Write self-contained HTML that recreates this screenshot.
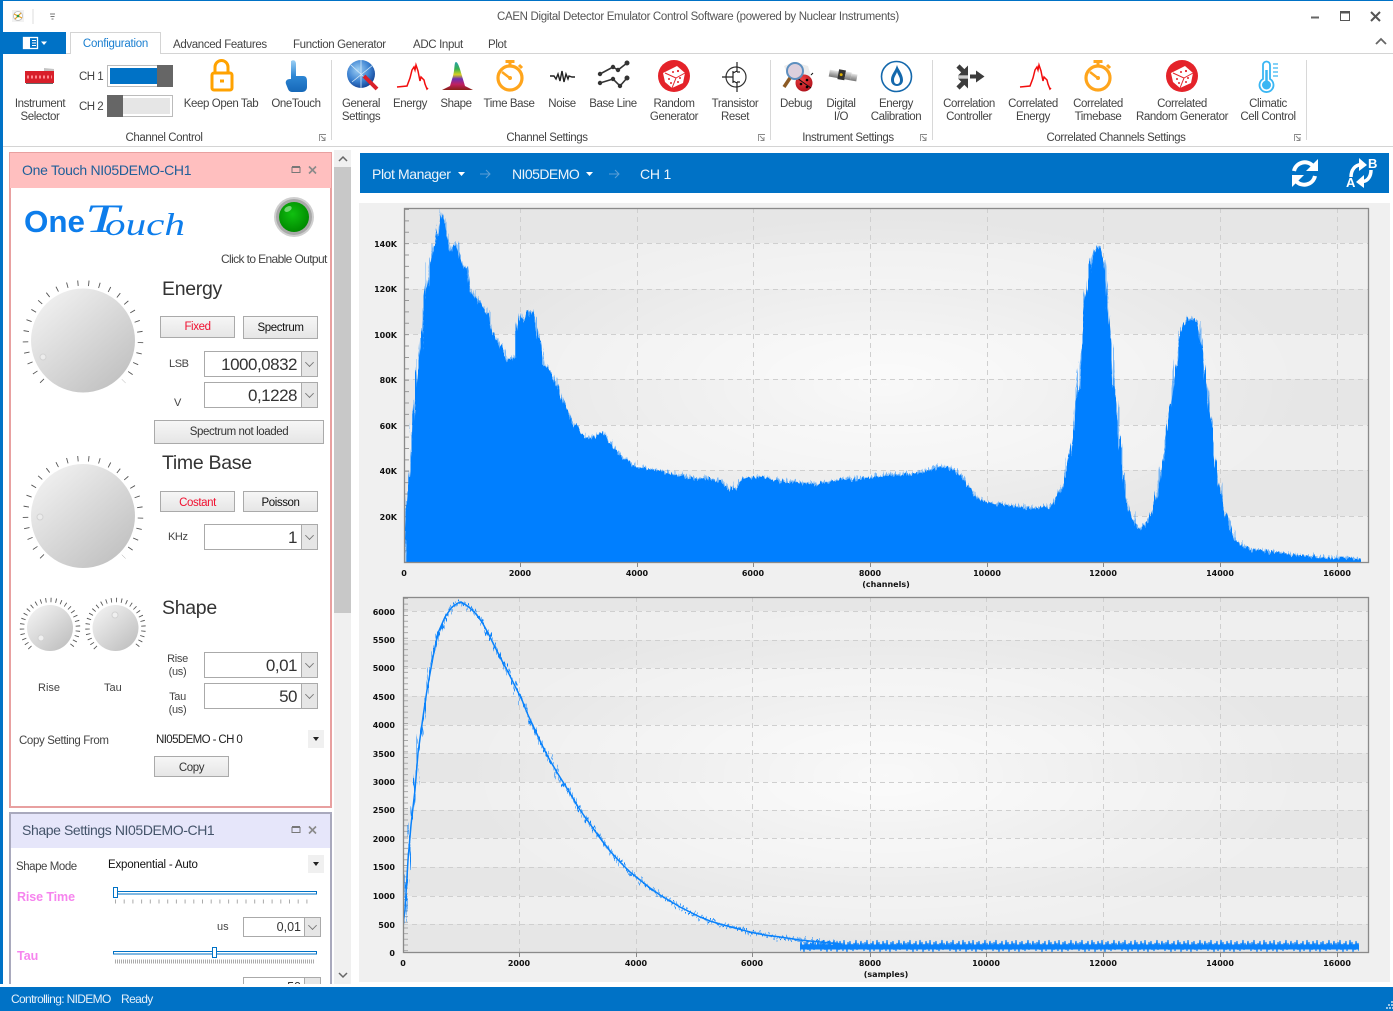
<!DOCTYPE html>
<html><head><meta charset="utf-8"><style>
html,body{margin:0;padding:0;background:#fff}
#p{position:relative;width:1393px;height:1011px;overflow:hidden;background:#fff;font:12px/13px "Liberation Sans",sans-serif;color:#444}
.a{position:absolute;white-space:nowrap}
.t{font-size:11.5px;letter-spacing:-.35px}
.c{position:absolute;width:160px;text-align:center;white-space:nowrap;top:98px;font-size:11.5px;letter-spacing:-.4px}
.g{top:132px}
.b{position:absolute;box-sizing:border-box;border:1px solid #aaa;background:linear-gradient(#f6f6f6,#e6e6e6);text-align:center;color:#333;line-height:22px;font-size:11.5px;letter-spacing:-.4px}
.i{position:absolute;box-sizing:border-box;border:1px solid #aaa;background:#fff;font-size:17px;letter-spacing:-.5px;line-height:25px;text-align:right;padding-right:20px;color:#333}
.i:after{content:"";position:absolute;right:0;top:0;bottom:0;width:15px;background:#e6e6e6;border-left:1px solid #aaa}
.i i{position:absolute;right:4px;top:50%;margin-top:-5px;width:6px;height:6px;border-right:1.5px solid #777;border-bottom:1.5px solid #777;transform:rotate(45deg) scale(.9);z-index:1}
.d{position:absolute;width:16px;height:18px;background:#f0f0f0}
.d:after{content:"";position:absolute;left:5px;top:7px;border:3px solid transparent;border-top:4px solid #222}
svg{position:absolute;left:0;top:0}
</style></head><body><div id="p">

<div class="a" style="left:0;top:0;width:1393px;height:1px;background:#0072c6"></div>
<div class="a" style="left:0;top:0;width:3px;height:1011px;background:#0072c6"></div>
<div class="a" style="left:3px;top:146px;width:1390px;height:1px;background:#d4d4d4"></div>
<div class="a" style="left:66px;top:53px;width:1327px;height:1px;background:#d4d4d4"></div>

<div class="a" style="left:497px;top:11px;font-size:11.5px;letter-spacing:-.33px;color:#555">CAEN Digital Detector Emulator Control Software (powered by Nuclear Instruments)</div>

<div class="a" style="left:3px;top:32px;width:63px;height:22px;background:#0072c6"></div>
<div class="a" style="left:70px;top:32px;width:91px;height:22px;box-sizing:border-box;border:1px solid #d4d4d4;border-bottom:0;background:#fff;color:#1a7fd0;text-align:center;line-height:23px;font-size:11.5px;letter-spacing:-.25px">Configuration</div>
<div class="a t" style="left:173px;top:39px">Advanced Features</div>
<div class="a t" style="left:293px;top:39px">Function Generator</div>
<div class="a t" style="left:413px;top:39px">ADC Input</div>
<div class="a t" style="left:488px;top:39px">Plot</div>

<div class="c" style="left:-40px">Instrument<br>Selector</div>
<div class="c" style="left:141px">Keep Open Tab</div>
<div class="c" style="left:216px">OneTouch</div>
<div class="c" style="left:281px">General<br>Settings</div>
<div class="c" style="left:330px">Energy</div>
<div class="c" style="left:376px">Shape</div>
<div class="c" style="left:429px">Time Base</div>
<div class="c" style="left:482px">Noise</div>
<div class="c" style="left:533px">Base Line</div>
<div class="c" style="left:594px">Random<br>Generator</div>
<div class="c" style="left:655px">Transistor<br>Reset</div>
<div class="c" style="left:716px">Debug</div>
<div class="c" style="left:761px">Digital<br>I/O</div>
<div class="c" style="left:816px">Energy<br>Calibration</div>
<div class="c" style="left:889px">Correlation<br>Controller</div>
<div class="c" style="left:953px">Correlated<br>Energy</div>
<div class="c" style="left:1018px">Correlated<br>Timebase</div>
<div class="c" style="left:1102px">Correlated<br>Random Generator</div>
<div class="c" style="left:1188px">Climatic<br>Cell Control</div>
<div class="c g" style="left:84px">Channel Control</div>
<div class="c g" style="left:467px">Channel Settings</div>
<div class="c g" style="left:768px">Instrument Settings</div>
<div class="c g" style="left:1036px">Correlated Channels Settings</div>
<div class="a t" style="left:79px;top:71px;letter-spacing:-.5px">CH 1</div>
<div class="a t" style="left:79px;top:101px;letter-spacing:-.5px">CH 2</div>

<div class="a" style="left:107px;top:65px;width:66px;height:22px;box-sizing:border-box;border:1px solid #bbb"></div>
<div class="a" style="left:110px;top:68px;width:47px;height:16px;background:#0072c6"></div>
<div class="a" style="left:157px;top:65px;width:16px;height:22px;background:#666"></div>
<div class="a" style="left:107px;top:95px;width:66px;height:22px;box-sizing:border-box;border:1px solid #bbb"></div>
<div class="a" style="left:123px;top:98px;width:47px;height:16px;background:#e6e6e6"></div>
<div class="a" style="left:107px;top:95px;width:16px;height:22px;background:#666"></div>

<!-- ribbon icons -->
<svg width="1393" height="150" viewBox="0 0 1393 150">
<defs>
<radialGradient id="gl" cx=".4" cy=".35" r=".7"><stop offset="0" stop-color="#9fd0f5"/><stop offset=".6" stop-color="#3a80d0"/><stop offset="1" stop-color="#123f90"/></radialGradient>
<radialGradient id="bug" cx=".4" cy=".3" r=".8"><stop offset="0" stop-color="#f04040"/><stop offset="1" stop-color="#a80d18"/></radialGradient>
<linearGradient id="rb" x1="0" y1="0" x2="0" y2="1"><stop offset="0" stop-color="#27a0a8"/><stop offset=".25" stop-color="#38b050"/><stop offset=".45" stop-color="#d8d020"/><stop offset=".6" stop-color="#7030b0"/><stop offset=".8" stop-color="#c02060"/><stop offset="1" stop-color="#8a2015"/></linearGradient>
<linearGradient id="hf" x1="0" y1="0" x2="0" y2="1"><stop offset="0" stop-color="#9cd0f4"/><stop offset=".5" stop-color="#2d86d4"/><stop offset="1" stop-color="#1668b8"/></linearGradient>
<linearGradient id="cn" x1="0" y1="0" x2="0" y2="1"><stop offset="0" stop-color="#e8e8e8"/><stop offset=".5" stop-color="#aaa"/><stop offset="1" stop-color="#777"/></linearGradient>
<g id="sw"><circle cx="0" cy="0" r="12" fill="#fff" stroke="#ffa51c" stroke-width="3.2"/><rect x="-4.500" y="-18" width="9" height="3" fill="#ffa51c"/><rect x="-1.500" y="-16" width="3" height="4" fill="#ffa51c"/><path d="M9-13l3 3" stroke="#ffa51c" stroke-width="3"/><path d="M-8-6L1 1" stroke="#ffa51c" stroke-width="2.500"/><circle r="2" fill="#ffa51c"/></g>
<path id="sp" d="M0 24l10-1 3-8 2-8 2-3 1 3 1-5 2 6 1 5 1 5 1-4 3 3 1 4 2 5 1-1" fill="none" stroke="#f20d0d" stroke-width="1.500"/>
<g id="dc"><circle r="16" fill="#e4232a"/><path d="M-11-3L3-10 11-3 9 7-2 12-9 6Z" fill="#fff"/><path d="M-9-3L2 2-2 12M2 2L11-3" stroke="#e4232a" stroke-width="1" fill="none"/><g fill="#e4232a"><circle cx="-5" cy="3" r="1"/><circle cx="-3" cy="7" r="1"/><circle cx="4" cy="-5" r="1.100"/><circle cx="-1" cy="-4" r="1"/><circle cx="6" cy="2" r="1"/><circle cx="4" cy="6" r="1"/></g></g>
</defs>

<rect x="12" y="10" width="12" height="12" fill="#f2f2f2"/><circle cx="18" cy="16" r="4.500" fill="#fff" stroke="#bbb" stroke-width=".8"/><path d="M14 14l8 4M15 19l6-6" stroke="#e8a020" stroke-width="1.200"/><circle cx="18" cy="16" r="1.300" fill="#2b9a4a"/>
<path d="M33 9v15" stroke="#ddd"/><path d="M50 14h5M50.500 16.500h4M51.500 19h2" stroke="#777" stroke-width="1"/>
<path d="M1376 44l5-5 5 5" fill="none" stroke="#666" stroke-width="1.800"/>
<path d="M1311 17.500h8" stroke="#666" stroke-width="2"/><rect x="1340.500" y="11.500" width="9" height="9" fill="none" stroke="#555"/><path d="M1340 12.500h10" stroke="#555" stroke-width="2"/><path d="M1371 12l9 9M1380 12l-9 9" stroke="#555" stroke-width="2"/>
<rect x="23.500" y="37.500" width="14" height="11" fill="none" stroke="#fff" stroke-width="1.300"/><rect x="24" y="38" width="6" height="10" fill="#fff"/><path d="M32 40.500h4M32 43h4M32 45.500h4" stroke="#fff"/><path d="M41 41.500h6l-3 3.500z" fill="#fff"/>

<!-- instrument -->
<path d="M44 68l10 1v6H44z" fill="#c4c4c4"/><rect x="25" y="71" width="29" height="12" fill="#d81f2a"/><path d="M27 77h25" stroke="#ff8a90" stroke-dasharray="2 2" stroke-width="3"/><path d="M26 83.500h27" stroke="#666"/>
<!-- lock -->
<path d="M215 74v-7a6.500 6.500 0 0 1 13 0v7" fill="none" stroke="#ffa200" stroke-width="3"/><rect x="212" y="73" width="20" height="17" rx="2" fill="#fff" stroke="#ffa200" stroke-width="3"/><path d="M220 81h4" stroke="#ffa200" stroke-width="3"/>
<!-- hand -->
<path d="M291 61c3-2 5 0 5 3v12h7c3 0 4 2 4 5v6c0 3-2 5-5 5h-9c-3 0-4-1-5-3l-2-5c-1-3 1-5 4-5h1z" fill="url(#hf)"/>
<!-- globe -->
<circle cx="361" cy="74" r="14" fill="url(#gl)"/><path d="M351 65l13 12M373 65l-21 17M361 60v28" stroke="#d8ecfa" stroke-width=".8"/><path d="M364 76l13 13" stroke="#d9202a" stroke-width="4"/>
<!-- energy -->
<use href="#sp" x="397" y="63"/>
<!-- shape -->
<path d="M456 62c2 0 4 7 6 14l3 10 8 4h-31l8-4 3-10c2-7 1-14 3-14z" fill="url(#rb)"/>
<use href="#sw" x="510" y="78"/>
<!-- noise -->
<path d="M550 76h4l2 3 2-5 2 7 2-10 2 11 2-8 2 5 1-3 3 1h3" fill="none" stroke="#222" stroke-width="1.400"/>
<!-- baseline -->
<path d="M600 74l13-7 5 3 9-7M600 83l13-4 7 7 7-8" fill="none" stroke="#333" stroke-width="1.600"/><g fill="#333"><circle cx="600" cy="74" r="2.200"/><circle cx="613" cy="67" r="2.200"/><circle cx="618" cy="70" r="2.200"/><circle cx="627" cy="63" r="2.500"/><circle cx="600" cy="83" r="2.200"/><circle cx="613" cy="79" r="2.200"/><circle cx="620" cy="86" r="2.200"/><circle cx="627" cy="78" r="2.500"/></g>
<use href="#dc" x="674" y="76"/>
<!-- transistor -->
<circle cx="736" cy="77" r="10" fill="none" stroke="#333" stroke-width="1.200"/><path d="M722 77h11M733 71v12M737 62v10M737 82v10M733 73l4-2M733 81l4 2M737 72h3M737 82h3" fill="none" stroke="#222" stroke-width="1.200"/>
<!-- debug -->
<path d="M784 66l10-4 14 4 3 10-8 8-14-6z" fill="#ececec"/><circle cx="804" cy="83" r="8.500" fill="url(#bug)"/><path d="M797 78l14 10M811 75l2-2" stroke="#111"/><circle cx="801" cy="84" r="1.300"/><circle cx="807" cy="80" r="1.300"/><circle cx="807" cy="87" r="1.300"/><circle cx="795" cy="71" r="8" fill="#d8c8d8" fill-opacity=".8" stroke="#5d8fbf" stroke-width="2"/><path d="M790 78l-6 9" stroke="#8c5a24" stroke-width="3.500"/>
<!-- digital -->
<g transform="rotate(10 843 76)"><rect x="829" y="72" width="10" height="7" fill="url(#cn)"/><rect x="838" y="70" width="7" height="10" fill="#333"/><circle cx="841" cy="75" r="1.500" fill="#e0b000"/><rect x="845" y="71" width="6" height="8" fill="url(#cn)"/><rect x="851" y="72" width="6" height="7" fill="url(#cn)"/></g>
<!-- calibration -->
<circle cx="896.500" cy="76.500" r="15" fill="#fff" stroke="#1468ac" stroke-width="1.600"/><path d="M897 65c1 4 6 9 6 15 0 4-3 6-6 6s-6-2-6-6c0-6 4-8 6-15zM897 72c-1 3-3 5-3 8s1.500 4 3 4 3-1 3-4-2-5-3-8z" fill="#1468ac" fill-rule="evenodd"/>
<!-- correlation -->
<path d="M958 66l7 7M958 88l7-7" stroke="#3c3c3c" stroke-width="4.500"/><path d="M968 75.500h-10l10-10zM968 78.500h-10l10 10z" fill="#3c3c3c"/><path d="M958 77h10" stroke="#bbb" stroke-width="1.500"/><path d="M970 74.500h6v-4l8.500 6-8.500 6v-4h-6z" fill="#3c3c3c"/>
<use href="#sp" x="1020" y="63"/>
<use href="#sw" x="1098" y="78"/>
<use href="#dc" x="1182" y="76"/>
<!-- thermometer -->
<path d="M1263 79V65a3.500 3.500 0 0 1 7 0v14a7 7 0 1 1-7 0z" fill="#fff" stroke="#3ab6f3" stroke-width="1.800"/><circle cx="1266.500" cy="85" r="4.500" fill="#3ab6f3"/><path d="M1266.500 70v14" stroke="#3ab6f3" stroke-width="2.500"/><path d="M1273 64h5M1273 68h5M1273 72h5M1273 76h5" stroke="#3ab6f3" stroke-width="1.300"/>
<!-- separators -->
<path d="M331.500 60v80M770.500 60v80M932.500 60v80M1306.500 60v80" stroke="#d8d8d8"/>
<g fill="none" stroke="#888" stroke-width=".9"><path d="M319.500 141v-6.500h6.500M321 136l4 4M325 137v3.500h-3.500"/><path d="M758.500 141v-6.500h6.500M760 136l4 4M764 137v3.500h-3.500"/><path d="M920.500 141v-6.500h6.500M922 136l4 4M926 137v3.500h-3.500"/><path d="M1294.500 141v-6.500h6.500M1296 136l4 4M1300 137v3.500h-3.500"/></g>
</svg>

<!-- scrollbar -->
<div class="a" style="left:334px;top:150px;width:17px;height:835px;background:#f0f0f0"></div>
<div class="a" style="left:334px;top:167px;width:17px;height:446px;background:#c8c8c8"></div>

<!-- one touch panel -->
<div class="a" style="left:9px;top:152px;width:323px;height:656px;box-sizing:border-box;border:2px solid #e8a0a0;background:#fff"></div>
<div class="a" style="left:10px;top:153px;width:321px;height:35px;background:#ffbfbf"></div>
<div class="a" style="left:22px;top:162px;font-size:14px;line-height:16px;color:#1f5f99;letter-spacing:-.29px">One Touch NI05DEMO-CH1</div>

<!-- shape panel -->
<div class="a" style="left:9px;top:812px;width:323px;height:172px;box-sizing:border-box;border:2px solid #a9a9bd;border-bottom:0;background:#fff"></div>
<div class="a" style="left:11px;top:814px;width:319px;height:34px;background:#e6e6fa"></div>
<div class="a" style="left:22px;top:822px;font-size:14px;line-height:16px;color:#44546a;letter-spacing:-.4px">Shape Settings NI05DEMO-CH1</div>

<svg width="352" height="1011" viewBox="0 0 352 1011">
<defs>
<linearGradient id="kn" x1=".15" y1=".1" x2=".85" y2=".9"><stop offset="0" stop-color="#efefef"/><stop offset="1" stop-color="#c2c2c2"/></linearGradient>
<radialGradient id="led" cx=".45" cy=".4" r=".6"><stop offset="0" stop-color="#10c010"/><stop offset="1" stop-color="#008a00"/></radialGradient>
<g id="big"><path d="M-40.660 40.660A57.500 57.500 0 1 1 40.660 40.660" fill="none" stroke="#555" stroke-width="5.500" pathLength="270" stroke-dasharray="0.900 9.900"/><circle r="52" fill="url(#kn)"/></g>
<g id="sm"><path d="M-19.800 19.800A28 28 0 1 1 19.800 19.800" fill="none" stroke="#555" stroke-width="4.500" pathLength="270" stroke-dasharray="1.800 8.700"/><circle r="23" fill="url(#kn)"/></g>
</defs>
<g fill="none" stroke="#777"><path d="M292 167.500h8v5h-8z"/><path d="M292 167h8" stroke-width="2"/><path d="M309 166.500l7 7M316 166.500l-7 7" stroke-width="1.600" stroke="#8a8a8a"/></g>
<g fill="none" stroke="#777"><path d="M292 827.500h8v5h-8z"/><path d="M292 827h8" stroke-width="2"/><path d="M309 826.500l7 7M316 826.500l-7 7" stroke-width="1.600" stroke="#8a8a8a"/></g>
<path d="M339 161l4-4 4 4M339 973l4 4 4-4" fill="none" stroke="#666" stroke-width="1.500"/>
<circle cx="294" cy="217" r="20" fill="#cfcfcf"/><circle cx="294" cy="217" r="18" fill="#a8a8a8"/><circle cx="294" cy="217" r="15" fill="url(#led)"/><ellipse cx="288" cy="209" rx="4" ry="2.500" fill="#9ce89c" opacity=".7" transform="rotate(-30 288 209)"/>
<text x="24" y="232" font-family="Liberation Sans,sans-serif" font-weight="700" font-size="31" fill="#0d7deb" textLength="61" lengthAdjust="spacingAndGlyphs">One</text>
<text x="85" y="232" font-family="Liberation Serif,serif" font-style="italic" font-size="40" fill="#0d7deb" textLength="34" lengthAdjust="spacingAndGlyphs">T</text>
<text x="105" y="235" font-family="Liberation Serif,serif" font-style="italic" font-size="32" fill="#0d7deb" textLength="80" lengthAdjust="spacingAndGlyphs">ouch</text>
<use href="#big" x="83" y="340.500"/><circle cx="43" cy="357" r="3" fill="#ececec" stroke="#d2d2d2"/>
<use href="#big" x="83" y="516"/><circle cx="40" cy="517" r="3" fill="#ececec" stroke="#d2d2d2"/>
<use href="#sm" x="50" y="628"/><circle cx="41" cy="638" r="3" fill="#f0f0f0" stroke="#d2d2d2"/>
<use href="#sm" x="115.500" y="628"/><circle cx="115" cy="615" r="3" fill="#f0f0f0" stroke="#d2d2d2"/>
<!-- sliders -->
<rect x="113.500" y="891.500" width="203" height="2.500" fill="#fff" stroke="#0072c6"/><rect x="113.500" y="887.500" width="4" height="10" fill="#fff" stroke="#0072c6"/>
<path d="M115 901.500h200" stroke="#aaa" stroke-width="4" stroke-dasharray="1 7.700"/>
<rect x="113.500" y="951.500" width="203" height="2.500" fill="#fff" stroke="#0072c6"/><rect x="212.500" y="947.500" width="4" height="10" fill="#fff" stroke="#0072c6"/>
<path d="M115 961.500h199" stroke="#aaa" stroke-width="4" stroke-dasharray="1 1"/>
</svg>

<div class="a" style="left:221px;top:253px;font-size:12px;letter-spacing:-.62px">Click to Enable Output</div>
<div class="a" style="left:162px;top:278px;font-size:19.5px;line-height:22px;letter-spacing:-.3px;color:#333">Energy</div>
<div class="a" style="left:162px;top:452px;font-size:19.5px;line-height:22px;letter-spacing:-.3px;color:#333">Time Base</div>
<div class="a" style="left:162px;top:597px;font-size:19.5px;line-height:22px;letter-spacing:-.3px;color:#333">Shape</div>
<div class="b" style="left:160px;top:316px;width:75px;height:22px;color:#f01030;line-height:21px">Fixed</div>
<div class="b" style="left:243px;top:316px;width:75px;height:23px;color:#111">Spectrum</div>
<div class="b" style="left:154px;top:420px;width:170px;height:24px">Spectrum not loaded</div>
<div class="b" style="left:160px;top:491px;width:75px;height:21px;color:#f01030">Costant</div>
<div class="b" style="left:243px;top:491px;width:75px;height:21px;color:#111">Poisson</div>
<div class="b" style="left:154px;top:756px;width:75px;height:21px">Copy</div>
<div class="a" style="left:169px;top:358px;font-size:11px;letter-spacing:-.4px">LSB</div>
<div class="a" style="left:174px;top:397px;font-size:11px">V</div>
<div class="a" style="left:168px;top:531px;font-size:11px;letter-spacing:-.4px">KHz</div>
<div class="a" style="left:167px;top:653px;width:21px;text-align:center;font-size:11px;letter-spacing:-.3px">Rise<br>(us)</div>
<div class="a" style="left:167px;top:691px;width:21px;text-align:center;font-size:11px;letter-spacing:-.3px">Tau<br>(us)</div>
<div class="a" style="left:38px;top:682px;font-size:11px">Rise</div>
<div class="a" style="left:104px;top:682px;font-size:11px">Tau</div>
<div class="i" style="left:204px;top:351px;width:114px;height:26px">1000,0832<i></i></div>
<div class="i" style="left:204px;top:382px;width:114px;height:26px">0,1228<i></i></div>
<div class="i" style="left:204px;top:524px;width:114px;height:26px">1<i></i></div>
<div class="i" style="left:204px;top:652px;width:114px;height:26px">0,01<i></i></div>
<div class="i" style="left:204px;top:683px;width:114px;height:26px">50<i></i></div>
<div class="a" style="left:19px;top:735px;font-size:11.5px;letter-spacing:-.37px">Copy Setting From</div>
<div class="a" style="left:156px;top:734px;font-size:11.5px;letter-spacing:-.6px;color:#222">NI05DEMO - CH 0</div>
<div class="d" style="left:308px;top:730px"></div>
<div class="a" style="left:16px;top:861px;font-size:11.5px;letter-spacing:-.45px">Shape Mode</div>
<div class="a" style="left:108px;top:859px;font-size:11.5px;letter-spacing:-.2px;color:#111">Exponential - Auto</div>
<div class="d" style="left:308px;top:855px"></div>
<div class="a" style="left:17px;top:891px;font-weight:700;font-size:12.5px;letter-spacing:-.1px;color:#f684ee">Rise Time</div>
<div class="a" style="left:17px;top:950px;font-weight:700;font-size:12.5px;color:#f684ee">Tau</div>
<div class="a" style="left:217px;top:921px;font-size:11px">us</div>
<div class="i" style="left:243px;top:917px;width:78px;height:20px;font-size:12.5px;letter-spacing:0;line-height:19px;padding-right:19px">0,01<i></i></div>
<div class="a" style="left:0;top:984px;width:352px;height:3px;background:#fff"></div>
<div class="i" style="left:243px;top:977px;width:78px;height:20px;clip-path:inset(0 0 13px 0);font-size:12.5px;letter-spacing:0;line-height:19px;padding-right:19px">50<i></i></div>

<!-- plot header -->
<div class="a" style="left:360px;top:153px;width:1029px;height:40px;background:#0072c6"></div>
<div class="a" style="left:372px;top:166px;font-size:14px;line-height:16px;color:#eef5fb;letter-spacing:-.4px">Plot Manager</div>
<div class="a" style="left:512px;top:166px;font-size:14px;line-height:16px;color:#eef5fb;letter-spacing:-.55px">NI05DEMO</div>
<div class="a" style="left:640px;top:166px;font-size:14px;line-height:16px;color:#eef5fb;letter-spacing:-.2px">CH 1</div>
<div class="a" style="left:359px;top:203px;width:1031px;height:779px;background:#f0f0f0"></div>

<!-- plots -->
<svg width="1393" height="1011" viewBox="0 0 1393 1011" font-family="DejaVu Sans,sans-serif" font-size="8" font-weight="700" fill="#111">
<defs>
<radialGradient id="glow" cx=".5" cy=".5" r=".5"><stop offset="0" stop-color="#fff" stop-opacity=".75"/><stop offset="1" stop-color="#fff" stop-opacity="0"/></radialGradient>
<clipPath id="c1"><rect x="405" y="209" width="963" height="353"/></clipPath>
<clipPath id="c2"><rect x="404" y="598" width="964" height="354"/></clipPath>
<filter id="n1" filterUnits="userSpaceOnUse" x="380" y="190" width="1000" height="780" color-interpolation-filters="sRGB"><feTurbulence type="fractalNoise" baseFrequency="0.45 0.015" numOctaves="2" seed="4"/><feDisplacementMap in="SourceGraphic" scale="9" xChannelSelector="A" yChannelSelector="R"/></filter>
<filter id="n2" filterUnits="userSpaceOnUse" x="380" y="190" width="1000" height="780" color-interpolation-filters="sRGB"><feTurbulence type="fractalNoise" baseFrequency="0.6 0.02" numOctaves="2" seed="9"/><feDisplacementMap in="SourceGraphic" scale="13" xChannelSelector="A" yChannelSelector="R"/></filter>
<pattern id="tail" patternUnits="userSpaceOnUse" x="0" y="938" width="43" height="16"><path d="M0 8L1 3 2 11 3 5 4 13 5 4 6 10 7 2 8 12 9 6 10 14 11 5 12 9 13 3 14 13 15 7 16 11 17 2 18 10 19 4 20 14 21 6 22 12 23 3 24 9 25 5 26 13 27 2 28 11 29 7 30 14 31 4 32 10 33 3 34 12 35 6 36 13 37 5 38 9 39 2 40 12 41 5 42 11 43 8" fill="none" stroke="#0a82fb" stroke-width="1.100"/></pattern>
</defs>
<!-- header icons -->
<path d="M458 172h7l-3.500 4zM586 172h7l-3.500 4z" fill="#fff"/>
<g fill="none" stroke="#5c9fd6" stroke-width="1"><path d="M480 174h10M486 170l4 4-4 4M609 174h10M615 170l4 4-4 4"/></g>
<g fill="none" stroke="#fff" stroke-width="4"><path d="M1294 171a11 11 0 0 1 19-5M1315 176a11 11 0 0 1-19 5"/></g>
<path d="M1318 159v12h-12zM1292 187v-12h12z" fill="#fff"/>
<g fill="none" stroke="#fff" stroke-width="3.500"><path d="M1351 177C1351 170 1355 165 1361 164.500M1371 170C1371 176 1368 181 1363 181.500"/></g>
<path d="M1359 158l8 7-8 6zM1364 175l-8 7 8 6z" fill="#fff"/>
<text x="1368" y="168" font-family="Liberation Sans,sans-serif" font-size="13" fill="#fff">B</text>
<text x="1346" y="187" font-family="Liberation Sans,sans-serif" font-size="13" fill="#fff">A</text>

<!-- plot 1 bg -->
<rect x="404" y="208" width="965" height="354" fill="#efefef"/>
<g fill="#e6e6e6"><rect x="404" y="208" width="965" height="35"/><rect x="404" y="289" width="965" height="45"/><rect x="404" y="379" width="965" height="46"/><rect x="404" y="470" width="965" height="46"/></g>
<ellipse cx="886" cy="385" rx="420" ry="170" fill="url(#glow)"/>
<g stroke="#cfcfcf" stroke-dasharray="5 4" fill="none"><path d="M404 243.500h965M404 289.500h965M404 334.500h965M404 379.500h965M404 425.500h965M404 470.500h965M404 516.500h965"/><path d="M520.500 208v354M637.500 208v354M753.500 208v354M870.500 208v354M987.500 208v354M1103.500 208v354M1220.500 208v354M1337.500 208v354"/></g>
<path d="M406.500 209v353" stroke="#999" stroke-width="5" stroke-dasharray="1 10.380"/>
<g clip-path="url(#c1)">
<g fill="#007fff" fill-opacity=".5" filter="url(#n2)"><path id="spec" d="M404 575V555L406 520 410 470 413 425 415 400 418 367 421 335 423 313 426 290 428 280 431 255 433 247 436 244 438 226 440 210 443 222 445 227 448 240 451 250 454 243 457 243 460 255 462 263 465 268 468 265 471 290 473 294 477 297 481 303 485 310 488 313 490 325 492 332 497 340 502 347 505 355 508 360 512 358 515 355 517 330 520 313 523 322 525 320 528 312 530 310 533 314 535 320 538 335 540 340 543 363 548 368 552 373 555 380 559 392 562 398 566 408 570 415 575 424 580 432 585 437 590 438 596 436 603 432 608 440 615 448 622 456 630 462 635 466 640 467 650 468 660 470 670 473 680 475 690 477 700 478 710 478 720 480 727 486 733 491 739 483 745 477 752 477 760 476 770 478 780 480 790 481 800 482 810 483 820 483 830 481 840 478 850 479 860 478 870 477 880 476 890 475 900 474 910 473 920 472 930 469 940 466 948 467 955 470 960 474 965 480 970 488 975 495 982 500 990 503 1000 504 1010 505 1020 506 1030 507 1040 507 1050 506 1055 500 1060 490 1065 475 1068 465 1072 440 1075 420 1078 385 1082 340 1086 295 1090 265 1094 252 1097 245 1100 248 1103 258 1106 285 1110 330 1114 380 1118 420 1122 465 1125 490 1129 510 1133 520 1137 527 1140 528 1145 524 1150 518 1155 503 1160 480 1165 445 1170 410 1175 370 1180 335 1184 322 1188 318 1192 320 1197 320 1201 342 1205 370 1210 415 1215 460 1220 490 1225 510 1230 528 1235 540 1240 543 1245 546 1252 549 1260 550 1270 551 1280 552 1290 554 1300 555 1310 555 1320 557 1330 558 1340 557 1350 558 1360 559 1361 575Z"/></g>
<g fill="#007fff" filter="url(#n1)"><use href="#spec" y="1"/></g>
<rect x="1361" y="556" width="8" height="6" fill="#efefef"/>
</g>
<rect x="404.500" y="208.500" width="964" height="354" fill="none" stroke="#8a8a8a" stroke-width="1.300"/>
<g text-anchor="end"><text x="397" y="247">140K</text><text x="397" y="292">120K</text><text x="397" y="338">100K</text><text x="397" y="383">80K</text><text x="397" y="429">60K</text><text x="397" y="474">40K</text><text x="397" y="520">20K</text></g>
<g text-anchor="middle"><text x="404" y="576">0</text><text x="520" y="576">2000</text><text x="637" y="576">4000</text><text x="753" y="576">6000</text><text x="870" y="576">8000</text><text x="987" y="576">10000</text><text x="1103" y="576">12000</text><text x="1220" y="576">14000</text><text x="1337" y="576">16000</text><text x="886" y="587">(channels)</text></g>
<path d="M520.500 562v5M637.500 562v5M753.500 562v5M870.500 562v5M987.500 562v5M1103.500 562v5M1220.500 562v5M1337.500 562v5" stroke="#888"/>

<!-- plot 2 -->
<rect x="403" y="597" width="966" height="355" fill="#efefef"/>
<g fill="#e6e6e6"><rect x="403" y="597" width="966" height="14"/><rect x="403" y="640" width="966" height="28"/><rect x="403" y="696" width="966" height="29"/><rect x="403" y="753" width="966" height="29"/><rect x="403" y="810" width="966" height="28"/><rect x="403" y="867" width="966" height="29"/><rect x="403" y="924" width="966" height="28"/></g>
<ellipse cx="886" cy="775" rx="420" ry="170" fill="url(#glow)"/>
<g stroke="#cfcfcf" stroke-dasharray="5 4" fill="none"><path d="M403 611.500h966M403 640.500h966M403 668.500h966M403 696.500h966M403 725.500h966M403 753.500h966M403 782.500h966M403 810.500h966M403 838.500h966M403 867.500h966M403 896.500h966M403 924.500h966"/><path d="M519.500 597v355M636.500 597v355M752.500 597v355M870.500 597v355M986.500 597v355M1103.500 597v355M1220.500 597v355M1337.500 597v355"/></g>
<path d="M405.500 598v354" stroke="#aaa" stroke-width="5" stroke-dasharray="1 4.680"/>
<g clip-path="url(#c2)">
<path id="wf" fill="none" stroke="#0a82fb" stroke-width="1.500" d="M403 925L405 910 408 860 411 825 415 790 418 753 423 717 427 690 433 657 438 633 445 617 452 607 458 603 461 602 466 605 470 608 476 614 482 622 488 633 495 647 501 659 508 672 515 686 522 700 528 715 535 730 541 743 548 757 558 774 568 790 574 800 580 810 590 824 600 838 610 851 620 862 630 872 640 880 650 888 660 895 670 901 680 907 690 912 700 917 710 921 720 924 735 928 750 932 765 935 780 937 800 940 820 942 840 944"/>
<g filter="url(#n2)"><use href="#wf"/></g>
<path d="M800 947H1359" stroke="#0a82fb" stroke-width="5" fill="none"/>
<rect x="800" y="938" width="559" height="14" fill="url(#tail)"/>
</g>
<rect x="403.500" y="597.500" width="965" height="355" fill="none" stroke="#8a8a8a" stroke-width="1.300"/>
<g text-anchor="end"><text x="395" y="615">6000</text><text x="395" y="643">5500</text><text x="395" y="671">5000</text><text x="395" y="700">4500</text><text x="395" y="728">4000</text><text x="395" y="757">3500</text><text x="395" y="785">3000</text><text x="395" y="813">2500</text><text x="395" y="842">2000</text><text x="395" y="870">1500</text><text x="395" y="899">1000</text><text x="395" y="928">500</text><text x="395" y="956">0</text></g>
<g text-anchor="middle"><text x="403" y="966">0</text><text x="519" y="966">2000</text><text x="636" y="966">4000</text><text x="752" y="966">6000</text><text x="870" y="966">8000</text><text x="986" y="966">10000</text><text x="1103" y="966">12000</text><text x="1220" y="966">14000</text><text x="1337" y="966">16000</text><text x="886" y="977">(samples)</text></g>
<path d="M519.500 952v5M636.500 952v5M752.500 952v5M870.500 952v5M986.500 952v5M1103.500 952v5M1220.500 952v5M1337.500 952v5" stroke="#888"/>
</svg>

<!-- status -->
<div class="a" style="left:0;top:987px;width:1393px;height:24px;background:#0072c6"></div>
<div class="a" style="left:11px;top:993px;color:#e6f0fa;letter-spacing:-.65px">Controlling: NIDEMO</div>
<div class="a" style="left:121px;top:993px;color:#e6f0fa;letter-spacing:-.6px">Ready</div>
<svg width="1393" height="1011" viewBox="0 0 1393 1011" style="pointer-events:none"><path d="M1391 1001h2v2h-2zM1388 1004h2v2h-2zM1391 1004h2v2h-2zM1386 1007h2v2h-2zM1389 1007h2v2h-2zM1392 1007h1v2h-1z" fill="#9cc6e6"/></svg>
</div></body></html>
